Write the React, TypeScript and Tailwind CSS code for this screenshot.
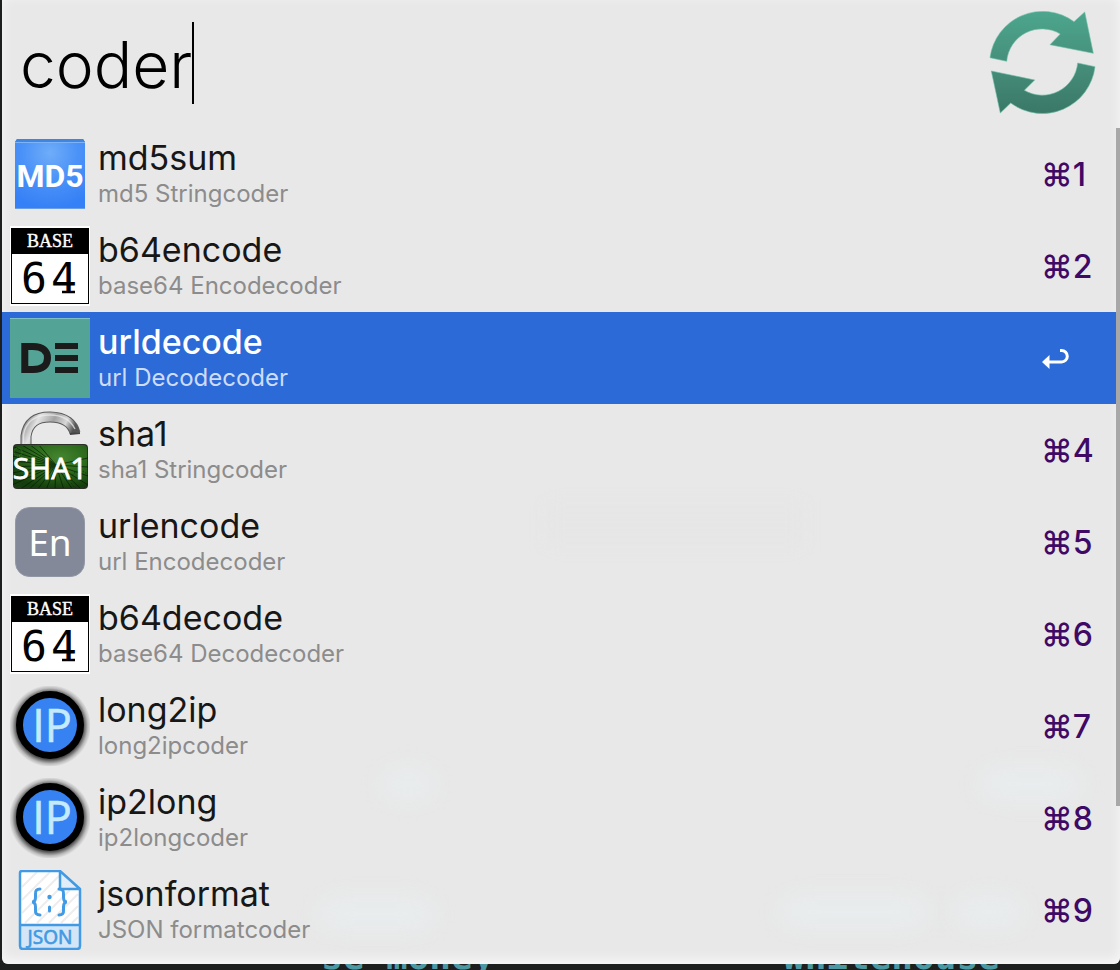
import React from "react";

type IconKind = "md5" | "base64" | "de" | "sha1" | "en" | "ip" | "json";

interface Result {
  title: string;
  subtitle: string;
  icon: IconKind;
  shortcut: string;
  selected?: boolean;
}

const results: Result[] = [
  { title: "md5sum", subtitle: "md5 Stringcoder", icon: "md5", shortcut: "⌘1" },
  { title: "b64encode", subtitle: "base64 Encodecoder", icon: "base64", shortcut: "⌘2" },
  { title: "urldecode", subtitle: "url Decodecoder", icon: "de", shortcut: "", selected: true },
  { title: "sha1", subtitle: "sha1 Stringcoder", icon: "sha1", shortcut: "⌘4" },
  { title: "urlencode", subtitle: "url Encodecoder", icon: "en", shortcut: "⌘5" },
  { title: "b64decode", subtitle: "base64 Decodecoder", icon: "base64", shortcut: "⌘6" },
  { title: "long2ip", subtitle: "long2ipcoder", icon: "ip", shortcut: "⌘7" },
  { title: "ip2long", subtitle: "ip2longcoder", icon: "ip", shortcut: "⌘8" },
  { title: "jsonformat", subtitle: "JSON formatcoder", icon: "json", shortcut: "⌘9" },
];

function Md5Icon() {
  return (
    <svg viewBox="0 0 80 80" className="size-20" aria-hidden="true">
      <defs>
        <radialGradient id="md5" cx="0.5" cy="0.2" r="0.8">
          <stop offset="0" stopColor="#6fadf9" />
          <stop offset="0.5" stopColor="#4b92f8" />
          <stop offset="1" stopColor="#3580f6" />
        </radialGradient>
      </defs>
      <path d="M7 5H73L75 8V75H5V8Z" fill="url(#md5)" />
      <path d="M7 5H73L75 8H5Z" fill="#3f86e0" />
      <path d="M5 8.500H75" stroke="#7db4f7" />
      <path d="M5 74.500H75" stroke="#6a9fe8" />
      <text x="40" y="53" textAnchor="middle" fontFamily="Roboto, sans-serif" fontWeight="700" fontSize="32" fill="#fff">MD5</text>
    </svg>
  );
}

function Base64Icon() {
  return (
    <svg viewBox="0 0 80 80" className="size-20" aria-hidden="true">
      <rect y="0" width="80" height="80" fill="#fff" />
      <rect x="1.500" y="2.500" width="77" height="75" fill="#fff" stroke="#000" />
      <rect x="1" y="2" width="78" height="26" fill="#000" />
      <text x="40" y="21" textAnchor="middle" fontFamily="'Liberation Serif', serif" fontSize="18" fill="#fff" stroke="#fff" strokeWidth="0.400">BASE</text>
      <text x="24" y="67" textAnchor="middle" fontFamily="'DejaVu Sans Mono', monospace" fontSize="43" fill="#000">6</text>
      <text x="54" y="67" textAnchor="middle" fontFamily="'DejaVu Sans Mono', monospace" fontSize="43" fill="#000">4</text>
      <path d="M52 66H65" stroke="#000" strokeWidth="2.500" />
    </svg>
  );
}

function DeIcon() {
  return (
    <svg viewBox="0 0 80 80" className="size-20" aria-hidden="true">
      <rect width="80" height="80" fill="#53a396" />
      <path d="M0 .5H80" stroke="#7cc0c4" />
      <path d="M14.800 28.500H23C33 28.500 37.500 33 37.500 40S33 51.500 23 51.500H14.800Z" fill="none" stroke="#1b1b1b" strokeWidth="7" />
      <path d="M45 28H68M45 40H68M45 52H68" stroke="#1b1b1b" strokeWidth="6" />
    </svg>
  );
}

function Sha1Icon() {
  return (
    <svg viewBox="0 0 80 80" className="size-20" aria-hidden="true">
      <defs>
        <linearGradient id="shackle" x1="0" x2="1" y1="0" y2="0.3">
          <stop offset="0" stopColor="#8b8b8b" />
          <stop offset="0.25" stopColor="#e3e3e3" />
          <stop offset="0.55" stopColor="#a2a2a2" />
          <stop offset="0.8" stopColor="#d8d8d8" />
          <stop offset="1" stopColor="#555" />
        </linearGradient>
        <radialGradient id="lock" cx="0.62" cy="0.3" r="0.75">
          <stop offset="0" stopColor="#46852f" />
          <stop offset="0.5" stopColor="#2c6a1c" />
          <stop offset="1" stopColor="#143e0d" />
        </radialGradient>
        <clipPath id="lockBody"><rect x="3" y="36" width="75" height="42" rx="4" /></clipPath>
      </defs>
      <path d="M16 37V26C18 12 27 7 40 7C56 7 63 15 65 23" fill="none" stroke="#5b5b5b" strokeWidth="11" />
      <path d="M16 37V26C18 12 27 7 40 7C56 7 63 15 65 23" fill="none" stroke="url(#shackle)" strokeWidth="9" />
      <path d="M13.500 36V25C16 10 27 5 40 5C53 5 61 11 65 19" fill="none" stroke="#eee" strokeWidth="1.500" opacity="0.7" />
      <path d="M60 24L70 23" stroke="#444" strokeWidth="2" />
      <rect x="3" y="34" width="75" height="45" rx="4" fill="#2c3029" />
      <rect x="4" y="35" width="73" height="42" rx="4" fill="url(#lock)" />
      <g clipPath="url(#lockBody)" fill="none" stroke="#071d05" strokeWidth="1" opacity="0.7">
        <path d="M2 36L46 55M2 41L46 55M2 46L46 55M2 51L46 55M2 57L46 55M2 63L46 55M2 69L46 55M2 75L46 55M9 80L46 55M18 80L46 55M27 80L46 55M36 80L46 55M45 80L46 55M54 80L46 55M63 80L46 55M72 80L46 55M78 75L46 55M78 66L46 55M78 57L46 55M78 48L46 55M10 34L46 55M19 34L46 55M28 34L46 55" />
        <circle cx="8" cy="42" r="4" strokeDasharray="1 1" stroke="#4c9a31" />
        <circle cx="70" cy="70" r="9" strokeDasharray="1 2" />
      </g>
      <text x="40" y="69" textAnchor="middle" fontFamily="'Open Sans', sans-serif" fontWeight="500" fontSize="30" fill="#fff" stroke="#fff" strokeWidth="0.800">SHA1</text>
    </svg>
  );
}

function EnIcon() {
  return (
    <svg viewBox="0 0 80 80" className="size-20" aria-hidden="true">
      <rect x="5.500" y="5.500" width="69" height="69" rx="14" fill="#838999" stroke="#9297a6" />
      <text x="40" y="54" textAnchor="middle" fontFamily="'Noto Sans', sans-serif" fontSize="37" fill="#fff">En</text>
    </svg>
  );
}

function IpIcon() {
  return (
    <svg viewBox="0 0 80 80" className="size-20" aria-hidden="true">
      <defs>
        <radialGradient id="halo">
          <stop offset="0.820" stopColor="#000" stopOpacity="0.65" />
          <stop offset="0.920" stopColor="#000" stopOpacity="0.2" />
          <stop offset="1" stopColor="#000" stopOpacity="0" />
        </radialGradient>
      </defs>
      <circle cx="40" cy="40" r="41" fill="url(#halo)" />
      <circle cx="40" cy="39" r="30.500" fill="#3782f3" stroke="#000" strokeWidth="7" />
      <text x="42" y="56" textAnchor="middle" fontFamily="'Open Sans', sans-serif" fontSize="45" fill="#c4ebfd" stroke="#c4ebfd" strokeWidth="0.600">IP</text>
    </svg>
  );
}

function JsonIcon() {
  return (
    <svg viewBox="0 0 80 80" className="size-20" aria-hidden="true">
      <path d="M11 1H50L70 19V78Q70 79 69 79H11Q10 79 10 78V2Q10 1 11 1Z" fill="#fff" />
      <path d="M12 17L27 2M12 30L40 2M12 43L49 6M15 53L51 17M27 53L60 20M39 53L68 24M51 53L68 36M62 53L68 47" stroke="#ededed" strokeWidth="2" />
      <path d="M10 55H70V79H10Z" fill="#d3e6f7" />
      <path d="M50 2V19H69" fill="#e1edf8" />
      <path d="M12 1H50L70 19V76Q70 79 67 79H13Q10 79 10 76V3Q10 1 12 1ZM50 2V19H69M10 55H70" fill="none" stroke="#419ae3" strokeWidth="2.500" strokeLinejoin="round" />
      <path d="M30 19Q25 19 25.500 24V27Q25.500 32 22 32Q25.500 32 25.500 37V40Q25 45 30 45M49 19Q54 19 53.500 24V27Q53.500 32 57 32Q53.500 32 53.500 37V40Q54 45 49 45M39.500 37V41" fill="none" stroke="#419ae3" strokeWidth="3" strokeLinecap="round" />
      <circle cx="39.500" cy="27" r="2.200" fill="#419ae3" />
      <text x="40" y="74" textAnchor="middle" fontFamily="'Noto Sans', sans-serif" fontSize="19" fill="#419ae3" stroke="#419ae3" strokeWidth="0.600">JSON</text>
    </svg>
  );
}

const icons: Record<IconKind, () => React.JSX.Element> = {
  md5: Md5Icon,
  base64: Base64Icon,
  de: DeIcon,
  sha1: Sha1Icon,
  en: EnIcon,
  ip: IpIcon,
  json: JsonIcon,
};

function RefreshIcon() {
  return (
    <svg viewBox="0 0 110 104" className="h-[104px] w-[110px]" aria-hidden="true">
      <defs>
        <linearGradient id="refresh" gradientUnits="userSpaceOnUse" x1="0" y1="2" x2="0" y2="102">
          <stop offset="0" stopColor="#4ca58c" />
          <stop offset="0.5" stopColor="#468f7b" />
          <stop offset="1" stopColor="#3a7867" />
        </linearGradient>
      </defs>
      <g fill="url(#refresh)" stroke="#6dbfa6" strokeWidth="0.600">
        <path d="M2 46.700A53 53 0 0 1 86 10.700L96.700 1L105.300 42.300L62 33.700L72.300 23A35.400 35.400 0 0 0 18.700 50.300Z" />
        <path d="M107 55.700A53 53 0 0 1 22.700 92L12.300 102L3.300 60L46.700 69L36.300 79.300A35.600 35.600 0 0 0 89.700 52Z" />
      </g>
    </svg>
  );
}

function ReturnIcon() {
  return (
    <svg viewBox="0 0 28 22" className="h-[22px] w-7" aria-label="Return" role="img">
      <path d="M8 14H20.500A5.800 5.800 0 0 0 20.500 2.400H19" fill="none" stroke="currentColor" strokeWidth="3" />
      <path d="M1 14L8.500 7V21Z" fill="currentColor" />
    </svg>
  );
}

function ResultRow({ result }: { result: Result }) {
  const Icon = icons[result.icon];
  return (
    <li>
      <button
        type="button"
        className={
          result.selected
            ? "flex h-[92px] w-full items-center bg-[#2b6ad7] pl-2 text-left text-white"
            : "flex h-[92px] w-full items-center pl-2 text-left text-[#171717]"
        }
      >
        <Icon />
        <span className="flex flex-1 flex-col pl-2">
          <span className={result.selected ? "text-[34px] leading-10 font-medium" : "text-[34px] leading-10"}>{result.title}</span>
          <span className={result.selected ? "text-2xl leading-8 text-[#cddcf7]" : "text-2xl leading-8 text-[#8c8c8c]"}>
            {result.subtitle}
          </span>
        </span>
        <span className={result.selected ? "w-[75px] pt-0.5 text-white" : "w-[75px] pt-0.5 text-[32px] font-[450] text-[#3e0a66]"}>
          {result.selected ? <ReturnIcon /> : result.shortcut}
        </span>
      </button>
    </li>
  );
}

/* Light from the terminal text that shows faintly through the translucent panel. */
function Vibrancy() {
  return (
    <div className="pointer-events-none absolute inset-0 overflow-hidden" aria-hidden="true">
      <div className="absolute top-[772px] left-[382px] h-6 w-12 rounded-full bg-[#e9eef0] blur-md" />
      <div className="absolute top-[772px] left-[980px] h-6 w-24 rounded-full bg-[#e9eef0] blur-md" />
      <div className="absolute top-[902px] left-[318px] h-6 w-28 rounded-full bg-[#e9eef0] blur-md" />
      <div className="absolute top-[900px] left-[780px] h-6 w-36 rounded-full bg-[#e9eef0] blur-md" />
      <div className="absolute top-[900px] left-[955px] h-6 w-16 rounded-full bg-[#e9eef0] blur-md" />
      <div className="absolute top-[505px] left-[545px] h-10 w-64 bg-[#e6e6e6] blur-sm" />
    </div>
  );
}

export default function App() {
  return (
    <div className="relative min-h-screen overflow-hidden bg-[#1d1e1e] pb-1.5 pl-0.5 font-[Inter,sans-serif]">
      <div className="absolute inset-x-0 bottom-0 font-['DejaVu_Sans_Mono',monospace] text-4xl leading-8 font-bold text-[#4b98a2]" aria-hidden="true">
        <span className="absolute bottom-[-3px] left-[321px]">se money</span>
        <span className="absolute bottom-[-3px] left-[783px]">whitehouse</span>
      </div>
      <main className="relative rounded-b-md bg-[#e8e8e8] pb-2 shadow-[inset_0_-4px_12px_rgba(255,255,255,0.7)]">
        <Vibrancy />
        <header className="relative flex h-32 items-center justify-between pr-[22px] pb-0.5 pl-[18px]">
          <div className="flex items-center">
            <input
              aria-label="Search"
              defaultValue="coder"
              spellCheck={false}
              className="field-sizing-content h-20 bg-transparent pt-1 text-[64px] font-[350] text-black outline-none"
            />
            <span className="h-[82px] w-0.5 bg-black" />
          </div>
          <RefreshIcon />
        </header>
        <div className="relative flex">
          <ul className="flex-1">
            {results.map((result) => (
              <ResultRow key={result.title} result={result} />
            ))}
          </ul>
          <div className="h-[678px] w-1 bg-[#a8a8a8]" />
        </div>
      </main>
    </div>
  );
}
